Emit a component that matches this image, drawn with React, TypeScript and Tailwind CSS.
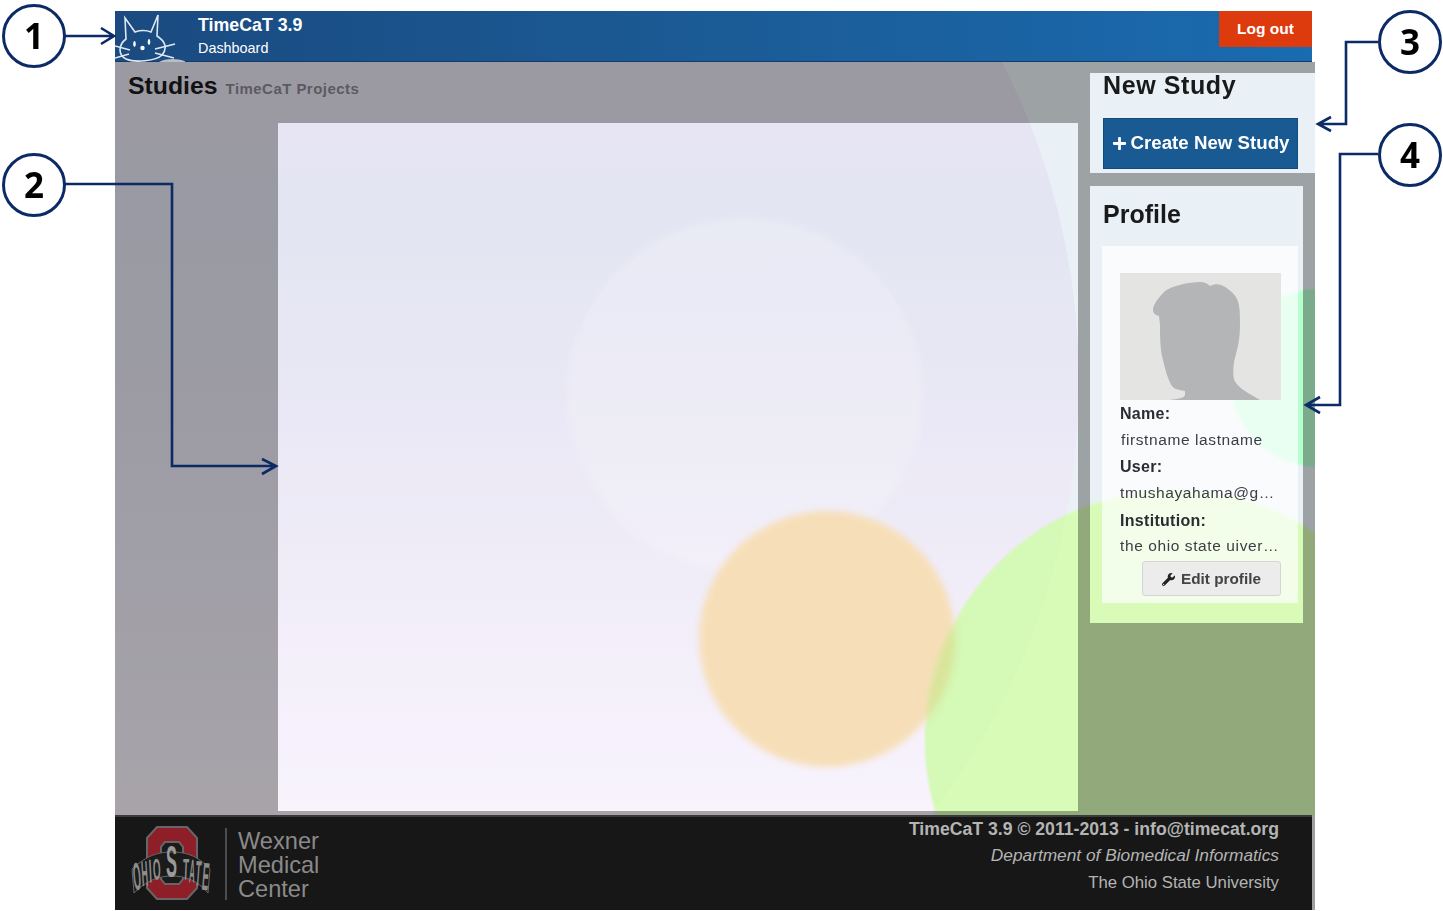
import { FaPlus, FaWrench } from "react-icons/fa";

const LETTERS = [
  { c: "O", x: 13, y: 71, sx: 0.33, sy: 1.3, r: -5 },
  { c: "H", x: 20.5, y: 67, sx: 0.3, sy: 1.2, r: -4 },
  { c: "I", x: 26, y: 63.5, sx: 0.34, sy: 1.1, r: -3 },
  { c: "O", x: 32, y: 60.5, sx: 0.33, sy: 1, r: -2 },
  { c: "T", x: 60.5, y: 60.5, sx: 0.33, sy: 1, r: 2 },
  { c: "A", x: 66.5, y: 63.5, sx: 0.26, sy: 1.1, r: 3 },
  { c: "T", x: 72.5, y: 67, sx: 0.3, sy: 1.2, r: 4 },
  { c: "E", x: 79.5, y: 71, sx: 0.33, sy: 1.3, r: 5 },
];

function CatLogo() {
  return (
    <svg width="70" height="51" viewBox="0 0 70 51" fill="none" stroke="#dfe8f2" strokeWidth="1.6" className="shrink-0">
      <path d="M11 28 L10 7 L20 21 C26 19 31 19 36 21 L43 4 L42 25 C50 30 53 37 47 44 C41 50 20 52 11 48 C3 44 3 34 11 28 Z" />
      <ellipse cx="19.5" cy="33" rx="1.3" ry="3" fill="#fff" stroke="none" />
      <ellipse cx="34" cy="31" rx="1.3" ry="3" fill="#fff" stroke="none" />
      <circle cx="27.5" cy="37" r="2.2" fill="#fff" stroke="none" />
      <path d="M0 35 L15 39 M0 47 L14 43 M40 38 L60 33 M40 42 L59 47" />
      <path d="M44 51 C50 47 64 47 72 51 Z" fill="#b9bdc6" stroke="none" />
    </svg>
  );
}

function OhioLogo() {
  return (
    <svg width="94" height="85" viewBox="0 0 94 85" className="shrink-0">
      <path d="M32 8 H62 L72 19 V69 L62 80 H32 L22 69 V19 Z" fill="#8e1f28" stroke="#666" strokeWidth="2" />
      <path d="M40 23 H54 L58 28 V60 L54 65 H40 L36 60 V28 Z" fill="#1b1b1b" stroke="#666" strokeWidth="2" />
      <path d="M7 50 C22 36 34 33 47 33 C60 33 72 36 85 50 L83 74 C72 61 60 57 47 57 C34 57 22 61 9 74 Z" fill="#1b1b1b" stroke="#666" strokeWidth="1" />
      {LETTERS.map((l, i) => (
        <text
          key={i}
          transform={`translate(${l.x} ${l.y}) rotate(${l.r}) scale(${l.sx} ${l.sy})`}
          textAnchor="middle"
          fontSize="30"
          fontWeight="700"
          fontFamily="'Liberation Sans', sans-serif"
          fill="#8d8d8d"
        >
          {l.c}
        </text>
      ))}
      <text transform="translate(46.5 58) scale(0.55 1.5)" textAnchor="middle" fontSize="30" fontWeight="700" fontFamily="'Liberation Sans', sans-serif" fill="#9a9a9a">
        S
      </text>
    </svg>
  );
}

function Avatar() {
  return (
    <svg width="161" height="127" viewBox="0 0 161 127" className="block bg-[#e4e4e2]">
      <path
        d="M50 127 C58 126 64 125 65 122 L65 118 C59 117 54 116 52 113 C48 107 45 96 42 83 C40 73 40 60 40 52 L39 43 C35 42 33 40 33 37 C33 32 37 26 45 18 C52 13 68 9 80 9 C85 9 88 11 90 13 C94 11 98 11 101 12 C108 15 114 20 117 26 C120 32 120 42 120 52 C120 70 116 80 114 89 C113 97 113 102 114 106 C116 112 122 116 128 120 L140 127 Z"
        fill="#b4b5b7"
      />
    </svg>
  );
}

function Backdrop() {
  return (
    <div className="absolute inset-0 overflow-hidden bg-[#ebf2f6]">
      <div className="absolute left-[-446px] top-[-385px] w-[1410px] h-[1410px] rounded-full bg-[linear-gradient(180deg,#e8e5f4_0%,#e8e6f4_31%,#e4e6f3_38%,#e9e8f5_50%,#f2eefa_66%,#f9f4fd_80%)]" />
      <div className="absolute left-[452px] top-[155px] w-[356px] h-[356px] rounded-full bg-white/20 blur-[4px]" />
      <div className="absolute left-[810px] top-[428px] w-[500px] h-[500px] rounded-full overflow-hidden bg-[#d8fdb8] blur-[1px]">
        <div className="absolute left-[-1256px] top-[-813px] w-[1410px] h-[1410px] rounded-full bg-[#d5f9b6]" />
      </div>
      <div className="absolute left-[584px] top-[449px] w-[256px] h-[256px] rounded-full overflow-hidden bg-[#f7dfb9] blur-[3px]">
        <div className="absolute left-[226px] top-[-21px] w-[500px] h-[500px] rounded-full bg-[#d8e69a]" />
      </div>
      <div className="absolute left-[1115px] top-[227px] w-[178px] h-[178px] rounded-full bg-[#b6ffcf] blur-[1px]" />
      <div className="absolute inset-0 bg-black/33" />
    </div>
  );
}

function Field({ label, value, indent }: { label: string; value: string; indent?: boolean }) {
  return (
    <>
      <div className="h-[26.7px] leading-[28px] text-[16px] font-bold tracking-[0.3px] text-[#2b2b33]">{label}</div>
      <div className={`h-[26.7px] leading-[26.7px] text-[15.5px] tracking-[0.6px] text-[#3c3c46] truncate ${indent ? "pl-px" : ""}`}>{value}</div>
    </>
  );
}

const NUMBERS = [
  { n: "1", cls: "left-[2px] top-[4px]" },
  { n: "2", cls: "left-[2px] top-[153px]" },
  { n: "3", cls: "left-[1378px] top-[10px]" },
  { n: "4", cls: "left-[1378px] top-[123px]" },
];

function Annotations() {
  return (
    <>
      <svg width="1443" height="911" className="absolute left-0 top-0 pointer-events-none" fill="none" stroke="#0c2a66" strokeWidth="2.6">
        <path d="M65 36 H114 M101 28 L114 36 L101 44" />
        <path d="M65 184 H172 V466 H276 M262 459 L276 466 L262 474" />
        <path d="M1378 42 H1346 V124 H1318 M1331 117 L1318 124 L1331 131" />
        <path d="M1378 154 H1340 V405 H1306 M1320 397 L1306 405 L1320 413" />
      </svg>
      {NUMBERS.map((a) => (
        <div
          key={a.n}
          className={`absolute ${a.cls} w-[64px] h-[64px] rounded-full border-[3px] border-[#0c2a66] bg-white flex items-center justify-center text-[35px] font-bold text-black font-['Open_Sans',sans-serif]`}
        >
          {a.n}
        </div>
      ))}
    </>
  );
}

export default function App() {
  return (
    <div className="relative w-[1443px] h-[911px] overflow-hidden bg-white font-['Liberation_Sans',Arial,sans-serif]">
      <div className="ml-[115px] pt-[11px] w-[1200px]">
        {/* header */}
        <header className="w-[1197px] h-[51px] flex bg-[linear-gradient(90deg,#1a4a80_0%,#1b5b96_50%,#1a6bb0_100%)] border-b border-[#123d6a]">
          <CatLogo />
          <div className="ml-[13px] text-white">
            <div className="text-[17.8px] font-bold leading-[20px] mt-[4px]">TimeCaT 3.9</div>
            <div className="text-[14.4px] leading-[18px] mt-[4px]">Dashboard</div>
          </div>
          <button className="ml-auto w-[93px] h-[36px] bg-[#dd3a0e] text-white text-[15.5px] font-bold">Log out</button>
        </header>

        {/* main */}
        <main className="relative h-[753px] flex">
          <Backdrop />
          <div className="relative w-[963px] flex flex-col pb-[4px]">
            <div className="pl-[13px] pt-[9px] flex items-baseline">
              <h1 className="text-[24.8px] font-bold leading-[30px] text-[#111]">Studies</h1>
              <span className="ml-[8px] text-[15px] font-bold tracking-[0.45px] text-[#5c5a60]">TimeCaT Projects</span>
            </div>
            <div className="mt-auto ml-[163px] w-[800px] h-[688px] backdrop-brightness-[1.49]" />
          </div>

          <aside className="relative ml-[12px] pt-[11px] flex flex-col gap-[13px]">
            <section className="w-[225px] h-[100px] px-[13px] backdrop-brightness-[1.49]">
              <h2 className="text-[25px] font-bold leading-[25px] tracking-[0.6px] text-[#1a1a1a]">New Study</h2>
              <button className="mt-[20px] w-[195px] h-[51px] bg-[#1a5a92] border border-[#0f4a80] text-white text-[18.7px] font-bold flex items-center justify-center gap-[4px]">
                <FaPlus className="w-[15px] h-[15px]" />
                Create New Study
              </button>
            </section>

            <section className="w-[213px] h-[437px] pl-[12px] pr-[5px] backdrop-brightness-[1.49]">
              <h2 className="ml-px text-[25px] font-bold leading-[30px] mt-[13px] text-[#1a1a1a]">Profile</h2>
              <div className="mt-[17px] h-[357px] bg-white/70 pl-[18px] pr-[17px] pt-[27px]">
                <Avatar />
                <Field label="Name:" value="firstname lastname" indent />
                <Field label="User:" value="tmushayahama@gmail.com" />
                <Field label="Institution:" value="the ohio state uiversity" />
                <div className="flex justify-end mt-px">
                  <button className="w-[139px] h-[35px] pt-px rounded-[3px] border border-[#d5d5d5] bg-[#ececec] text-[15.3px] font-bold text-[#444] flex items-center justify-center gap-[6px]">
                    <FaWrench className="w-[13px] h-[13px] text-[#222]" />
                    Edit profile
                  </button>
                </div>
              </div>
            </section>
          </aside>
        </main>

        {/* footer */}
        <div className="w-[1200px] bg-[#9f9f9f]">
          <footer className="w-[1197px] h-[95px] bg-[#171717] border-t-2 border-[#3a3a3a] flex">
            <div className="ml-[10px] mt-[2px]">
              <OhioLogo />
            </div>
            <div className="ml-[6px] mt-[11px] h-[72px] w-[2px] bg-[#4d4d4d]" />
            <div className="ml-[11px] mt-[12px] text-[23.6px] leading-[24px] text-[#8a8a8a]">
              <div>Wexner</div>
              <div>Medical</div>
              <div>Center</div>
            </div>
            <div className="ml-auto mr-[33px] text-right text-[#b4b4b4]">
              <div className="text-[17.65px] font-bold leading-[26px] mt-[-1px]">TimeCaT 3.9 © 2011-2013 - info@timecat.org</div>
              <div className="text-[17.3px] italic leading-[26px]">Department of Biomedical Informatics</div>
              <div className="text-[16.75px] leading-[26px] mt-[2px]">The Ohio State University</div>
            </div>
          </footer>
        </div>
      </div>
      <Annotations />
    </div>
  );
}
